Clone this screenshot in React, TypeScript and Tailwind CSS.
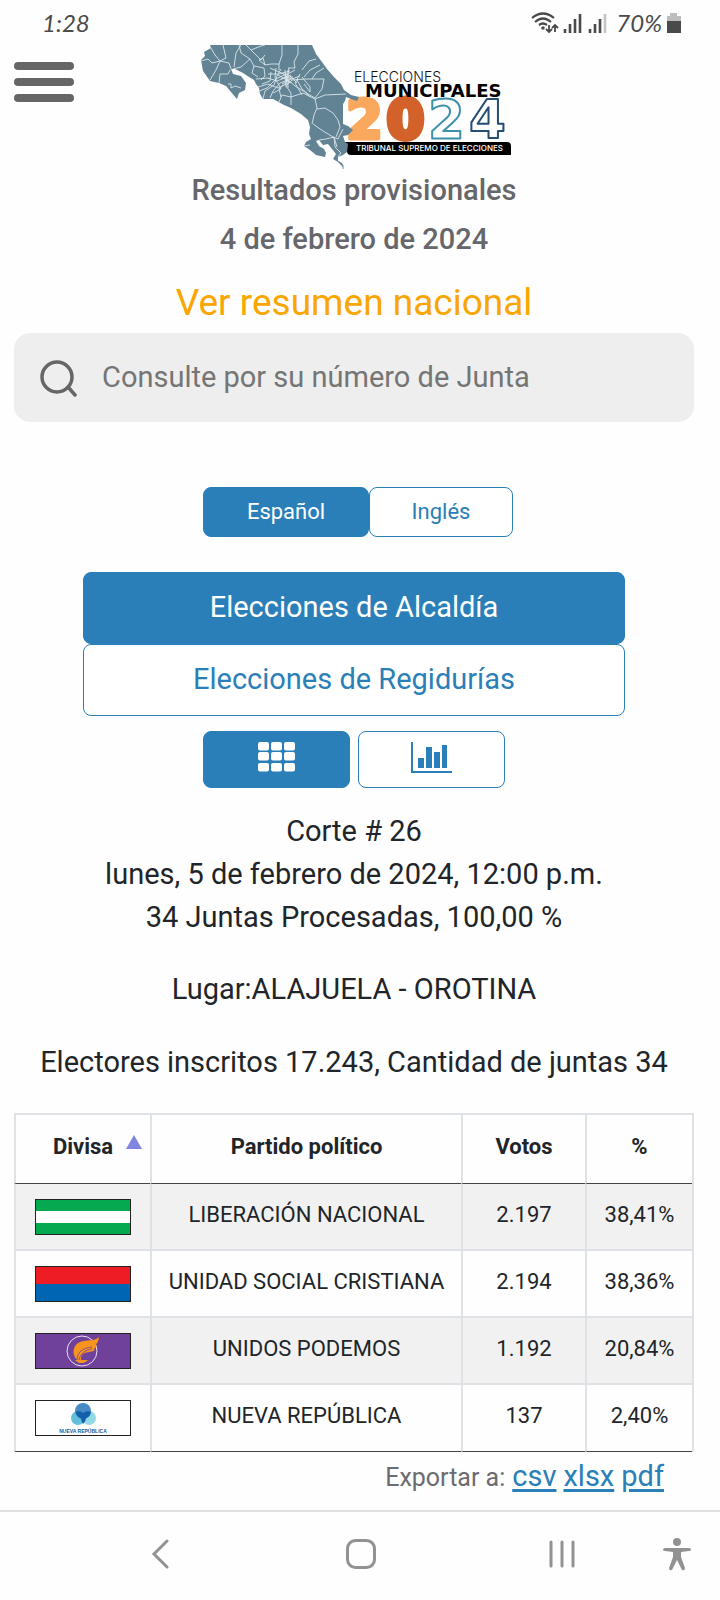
import React, { useState } from "react";

type Resultado = {
  partido: string;
  votos: string;
  porcentaje: string;
  bandera: React.ReactNode;
};

const resultados: Resultado[] = [
  { partido: "LIBERACIÓN NACIONAL", votos: "2.197", porcentaje: "38,41%", bandera: <BanderaLiberacion /> },
  { partido: "UNIDAD SOCIAL CRISTIANA", votos: "2.194", porcentaje: "38,36%", bandera: <BanderaUnidad /> },
  { partido: "UNIDOS PODEMOS", votos: "1.192", porcentaje: "20,84%", bandera: <BanderaUnidos /> },
  { partido: "NUEVA REPÚBLICA", votos: "137", porcentaje: "2,40%", bandera: <BanderaNueva /> },
];

function BanderaLiberacion() {
  return (
    <svg width="96" height="36" viewBox="0 0 96 36" className="mx-auto block">
      <rect width="96" height="36" fill="#222" />
      <rect x="1" y="1" width="94" height="34" fill="#04a950" />
      <rect x="1" y="12" width="94" height="12" fill="#fff" />
    </svg>
  );
}

function BanderaUnidad() {
  return (
    <svg width="96" height="36" viewBox="0 0 96 36" className="mx-auto block">
      <rect width="96" height="36" fill="#222" />
      <rect x="1" y="1" width="94" height="17" fill="#ee1c25" />
      <rect x="1" y="18" width="94" height="17" fill="#0066b3" />
    </svg>
  );
}

function BanderaUnidos() {
  return (
    <svg width="96" height="36" viewBox="0 0 96 36" className="mx-auto block">
      <rect width="96" height="36" fill="#222" />
      <rect x="1" y="1" width="94" height="34" fill="#70419a" />
      <circle cx="47" cy="18" r="15" fill="none" stroke="#e9dff2" strokeWidth="1" />
      <path
        d="M42 27C37 22 37 12 45 9C52 6 59 9 64 4C64 10 59 12 62 12C61 16 57 16 60 17C56 20 50 18 47 22C46 24 46 25 46 27Z"
        fill="#f7941d"
      />
      <path d="M42 27C42 19 48 15 57 14M44 27C45 21 50 17 57 16" fill="none" stroke="#70419a" strokeWidth="0.8" />
      <path d="M40 27H53C51 29 49 29 49 30H44C44 29 42 29 40 27Z" fill="#f7941d" />
    </svg>
  );
}

function BanderaNueva() {
  return (
    <svg width="96" height="36" viewBox="0 0 96 36" className="mx-auto block">
      <rect x="0.5" y="0.5" width="95" height="35" fill="#fff" stroke="#222" />
      <circle cx="43" cy="18" r="7" fill="#62bfdc" />
      <circle cx="54" cy="18" r="7" fill="#93d8e6" />
      <circle cx="48" cy="11" r="8" fill="#2c7bbd" opacity="0.88" />
      <path d="M41 12Q45 10 48 13Q52 10 56 12Q55 17 51 18Q51 21 48 24Q46 21 46 18Q42 17 41 12Z" fill="#135fa9" />
      <text
        x="48"
        y="33"
        textAnchor="middle"
        fontSize="5"
        fill="#17599a"
        className="font-['Liberation_Sans_Narrow','Liberation_Sans'] font-bold"
      >
        NUEVA REPÚBLICA
      </text>
    </svg>
  );
}

function BarraEstado() {
  return (
    <div className="flex h-[45px] items-center justify-between pl-[42px] pr-[38px] text-[#4a4a4a]">
      <span className="font-['Lato'] text-2xl italic">1:28</span>
      <div className="flex items-center gap-1">
        <svg width="78" height="22" viewBox="525 11 78 22" fill="none" stroke="#4a4a4a">
          <path d="M527 17Q538 8 549 17M530 21Q538 14 546 21M534 24Q538 21 542 24" strokeWidth="2.2" />
          <circle cx="538" cy="27" r="1.8" fill="#4a4a4a" stroke="none" />
          <path d="M544 24V31M541 28L544 31L547 28M550 31V24M547 27L550 24L553 27" strokeWidth="1.8" />
          <path d="M560 32V28M565 32V23M570 32V18M575 32V13M585 32V28M590 32V23M595 32V18" strokeWidth="2.6" />
          <path d="M600 32V13" stroke="#c4c4c4" strokeWidth="2.6" />
        </svg>
        <span className="ml-1 font-['Lato'] text-2xl italic">70%</span>
        <svg width="16" height="22" viewBox="0 0 16 22">
          <path d="M4 1H11V4H15V21H1V4H4Z" fill="#bdbdbd" />
          <path d="M1 9H15V21H1Z" fill="#4a4a4a" />
        </svg>
      </div>
    </div>
  );
}

function Logo() {
  return (
    <svg
      width="314"
      height="124"
      viewBox="196 45 314 124"
      className="overflow-visible"
      role="img"
      aria-label="Elecciones Municipales 2024"
    >
      {/* 2024 */}
      <text y="138" fontSize="53" strokeLinejoin="round" className="font-['DejaVu_Sans'] font-bold">
        <tspan x="345" fill="#f9a85d" stroke="#f9a85d" strokeWidth="4">2</tspan>
        <tspan x="386" fill="#d2622a" stroke="#d2622a" strokeWidth="6">0</tspan>
        <tspan x="427" fill="#fff" stroke="#3e91aa" strokeWidth="2">2</tspan>
        <tspan x="468" fill="#fff" stroke="#254d75" strokeWidth="2">4</tspan>
      </text>
      <path d="M344 142H506Q510 142 510 146V155H350Q346 155 346 151Z" fill="#000" />
      <text x="355" y="151" fontSize="8" fill="#fff" className="font-['Inter'] font-medium">
        TRIBUNAL SUPREMO DE ELECCIONES
      </text>
      <text x="353" y="82" fontSize="14" fill="#111" className="font-['Inter'] font-light">ELECCIONES</text>
      <text x="364" y="97" fontSize="18" fill="#000" className="font-['DejaVu_Sans'] font-bold">MUNICIPALES</text>
      {/* mapa */}
      <path
        d="M209 45H311L315 54L321 62L326 69L333 77L340 84L343 90L350 95L358 97L356 101L350 99L345 97L344 101L342 104V124L347 126L352 130L347 135L342 136L344 142L347 144L346 152L342 155L337 157L337 161L341 163L343 169L342 167L337 162L332 159L335 154L331 149L327 144L322 145L318 140L315 141L318 146L323 149L325 153L324 157L315 155L309 150L303 146L305 142L310 139L308 134L309 127L307 120L300 114L290 108L283 105L272 99L262 99L259 94L258 88L255 84L253 80L248 77L242 73L234 69L230 69L232 74L240 76L245 83L244 90L238 93L236 99L230 92L225 86L218 83L209 81L202 71L200 60L204 56L203 52L210 48Z"
        fill="#628394"
      />
      <g fill="none" stroke="#d9e5ea" strokeWidth="0.9" strokeLinejoin="round">
        <path d="M210 48L214 55L219 61L225 58L222 45M200 61L207 59L211 63L219 61L215 70L209 80M219 61L228 63L230 69M218 83L219 74L227 74L229 70M240 45L235 53L233 67M227 84L230 84V88L234 86L240 88" />
        <path d="M238 45L240 53L249 59L240 67L232 69M249 59L253 66L251 73L257 77M245 45L250 50L260 46L264 45M250 50L256 56L260 60L264 55M264 65L258 60L262 58L264 65L270 64H278L281 55V45M278 64V70M297 45V54L293 62L294 68L287 68M253 66L263 68L264 76L260 80M315 59L308 61L301 70M319 65L309 70L303 77M323 68L315 73L311 79" />
        <path d="M255 79L267 78L276 81L286 77L291 79L299 76M257 87L267 84L277 88L287 83M262 99L264 91L273 85L276 76L280 69M269 98L272 91L279 83L289 79M280 97L278 89L285 83L284 70M290 105V93L285 86L291 80L304 79H323L321 89L314 98L307 94L301 89L296 80M256 92L266 88L275 79L283 75M270 72L269 81L261 84M269 68L285 75L294 70M288 68L286 79L294 86L304 92L309 97M267 74H278L289 71M275 68L274 78L280 89L272 93M299 74L294 83L301 95M301 77L309 87V92L303 84" />
        <path d="M282 73L288 83M280 79L290 75M284 77H292M285 73V87M281 84L292 78M287 70V88M288 75L296 83M277 75L291 83" />
        <path d="M278 102L281 95L290 97L302 93L314 99L316 108L313 115L311 124M314 99L324 95L345 94M316 109L324 108L332 113L337 120L339 127L335 137M312 124L322 131L332 137L337 139L342 129M318 140L325 139L333 137L334 147L340 153L337 157M303 146L309 145M333 137L336 147" />
      </g>
      <path d="M337 161L342 165V169" fill="none" stroke="#628394" strokeWidth="0.8" />
    </svg>
  );
}

function App() {
  const [idioma, setIdioma] = useState("es");
  const [eleccion, setEleccion] = useState("alcaldia");
  const [vista, setVista] = useState("tabla");

  const activo = "border-[#2a7fb8] bg-[#2a7fb8] text-white";
  const inactivo = "border-[#2a7fb8] bg-white text-[#2a7fb8]";
  const enlace = "text-[#2a7fb8] underline decoration-[3px] underline-offset-[3px]";

  return (
    <div className="bg-[#fefefe] font-['Roboto',sans-serif] text-[29px] leading-[43px] text-[#212529]">
      <BarraEstado />

      <div className="pl-3.5 pr-[26px]">
        <header className="grid grid-cols-[60px_1fr_60px] items-start">
          <button aria-label="Menú" className="flex flex-col gap-2 pt-[17px]">
            <span className="h-2 w-full rounded-full bg-[#666]" />
            <span className="h-2 w-full rounded-full bg-[#666]" />
            <span className="h-2 w-full rounded-full bg-[#666]" />
          </button>
          <div className="flex justify-center">
            <Logo />
          </div>
        </header>

        <main>
          <div className="flex flex-col gap-1.5 text-center font-medium text-[#66666b]">
            <h1>Resultados provisionales</h1>
            <h2>4 de febrero de 2024</h2>
          </div>
          <div className="mt-3.5 text-center">
            <a href="#nacional" className="block text-[37px] leading-[56px] text-[#fba500]">
              Ver resumen nacional
            </a>
          </div>

          <label className="mt-0.5 flex h-[89px] items-center gap-6 rounded-2xl bg-[#eee] pl-[26px] pr-4">
            <svg width="38" height="38" viewBox="0 0 38 38" fill="none" stroke="#666" strokeWidth="3.5" className="shrink-0">
              <circle cx="17" cy="18" r="15" />
              <path d="M28 28L35 36" strokeLinecap="round" />
            </svg>
            <input
              type="text"
              aria-label="Número de Junta"
              placeholder="Consulte por su número de Junta"
              className="min-w-0 flex-1 bg-transparent outline-none placeholder:text-[#757575]"
            />
          </label>

          <div className="mt-[65px] flex justify-center pl-2 text-[22px] leading-8">
            <div className="flex w-[310px]">
              <button
                onClick={() => setIdioma("es")}
                className={`h-[50px] w-[166px] rounded-lg border ${idioma === "es" ? activo : inactivo}`}
              >
                Español
              </button>
              <button
                onClick={() => setIdioma("en")}
                className={`h-[50px] flex-1 rounded-lg border ${idioma === "en" ? activo : inactivo}`}
              >
                Inglés
              </button>
            </div>
          </div>

          <div className="mt-[35px] flex flex-col px-[69px]">
            <button
              onClick={() => setEleccion("alcaldia")}
              className={`h-[72px] rounded-lg border pb-0.5 ${eleccion === "alcaldia" ? activo : inactivo}`}
            >
              Elecciones de Alcaldía
            </button>
            <button
              onClick={() => setEleccion("regidurias")}
              className={`h-[72px] rounded-lg border pb-0.5 ${eleccion === "regidurias" ? activo : inactivo}`}
            >
              Elecciones de Regidurías
            </button>
          </div>

          <div className="mt-[15px] flex justify-center gap-2">
            <button
              aria-label="Tabla"
              onClick={() => setVista("tabla")}
              className={`flex h-[57px] w-[147px] justify-center rounded-lg border pt-2.5 ${vista === "tabla" ? activo : inactivo}`}
            >
              <svg width="37" height="30" viewBox="0 0 37 30" fill="currentColor">
                {[0, 13, 26].map((x) =>
                  [0, 10, 21].map((y) => <rect key={`${x}-${y}`} x={x} y={y} width="11" height="8.5" rx="2" />)
                )}
              </svg>
            </button>
            <button
              aria-label="Gráfico"
              onClick={() => setVista("grafico")}
              className={`flex h-[57px] w-[147px] justify-center rounded-lg border pt-2.5 ${vista === "grafico" ? activo : inactivo}`}
            >
              <svg width="41" height="31" viewBox="0 0 41 31" fill="currentColor">
                <path d="M0 0H2V29H41V31H0Z" />
                <path d="M7 16H13V26H7ZM15 5H21V26H15ZM23 10H29V26H23ZM31 3H36V26H31Z" />
              </svg>
            </button>
          </div>

          <div className="mt-[22px] text-center">
            <p>Corte # 26</p>
            <p>lunes, 5 de febrero de 2024, 12:00 p.m.</p>
            <p>34 Juntas Procesadas, 100,00 %</p>
            <p className="mt-[29px]">Lugar:ALAJUELA - OROTINA</p>
            <p className="mt-[30px] whitespace-nowrap">Electores inscritos 17.243, Cantidad de juntas 34</p>
          </div>

          <table className="mt-[29px] w-full table-fixed border-separate border-spacing-0 border-r-2 border-t-2 border-[#dee2e6] text-center text-[22px] leading-8">
            <colgroup>
              <col className="w-[136px]" />
              <col />
              <col className="w-[124px]" />
              <col className="w-[107px]" />
            </colgroup>
            <thead>
              <tr className="h-[69px] align-top font-bold">
                <th className="relative border-b border-l-2 border-b-[#444] border-l-[#dee2e6] pt-4">
                  Divisa
                  <svg width="16" height="14" viewBox="0 0 16 14" className="absolute right-2 top-5">
                    <path d="M8 0L16 14H0Z" fill="#8085e0" />
                  </svg>
                </th>
                <th className="border-b border-l-2 border-b-[#444] border-l-[#dee2e6] pt-4">Partido político</th>
                <th className="border-b border-l-2 border-b-[#444] border-l-[#dee2e6] pt-4">Votos</th>
                <th className="border-b border-l-2 border-b-[#444] border-l-[#dee2e6] pt-4">%</th>
              </tr>
            </thead>
            <tbody>
              {resultados.map((r) => (
                <tr
                  key={r.partido}
                  className="h-[67px] align-top odd:bg-[#f1f1f1] *:border-b-2 *:border-l-2 *:border-[#dee2e6] *:pt-[15px] last:*:border-b last:*:border-b-[#444]"
                >
                  <td>{r.bandera}</td>
                  <td className="whitespace-nowrap">{r.partido}</td>
                  <td>{r.votos}</td>
                  <td>{r.porcentaje}</td>
                </tr>
              ))}
            </tbody>
          </table>

          <div className="mt-[3px] flex items-baseline justify-end gap-[7px] pr-[30px]">
            <span className="text-[25px] text-[#6b6b70]">Exportar a:</span>
            <a href="#csv" className={enlace}>csv</a>
            <a href="#xlsx" className={enlace}>xlsx</a>
            <a href="#pdf" className={enlace}>pdf</a>
          </div>
        </main>
      </div>

      <nav className="mt-[11px] flex h-[90px] items-center border-t-2 border-[#e0e0e0] pb-1 pl-[59px] pr-[29px] text-[#929292]">
        <button aria-label="Atrás" className="flex flex-1 justify-center">
          <svg width="18" height="30" viewBox="0 0 18 30" fill="none" stroke="currentColor" strokeWidth="3">
            <path d="M16 2L3 15L16 28" strokeLinecap="round" />
          </svg>
        </button>
        <button aria-label="Inicio" className="flex flex-1 justify-center">
          <svg width="30" height="30" viewBox="0 0 30 30" fill="none" stroke="currentColor" strokeWidth="3">
            <rect x="1.5" y="1.5" width="27" height="27" rx="8" />
          </svg>
        </button>
        <button aria-label="Recientes" className="flex flex-1 justify-center">
          <svg width="28" height="30" viewBox="0 0 28 30" stroke="currentColor" strokeWidth="3" strokeLinecap="round">
            <path d="M3 3V27M14 3V27M25 3V27" />
          </svg>
        </button>
        <button aria-label="Accesibilidad">
          <svg width="28" height="34" viewBox="0 0 28 34" fill="currentColor">
            <circle cx="14" cy="5" r="4" />
            <path d="M2 11H26Q28 11 28 13Q28 14 26 14L18 15V20L22 31Q22 34 19 33L14 23L9 33Q6 34 6 31L10 20V15L2 14Q0 14 0 13Q0 11 2 11Z" />
          </svg>
        </button>
      </nav>
    </div>
  );
}

export default App;
